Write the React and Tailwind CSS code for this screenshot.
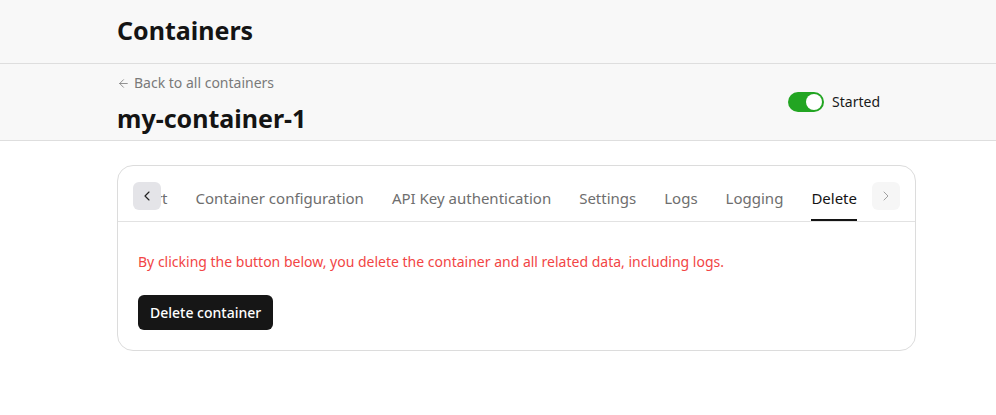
import React from "react";
import { ArrowLeft, ChevronLeft, ChevronRight } from "lucide-react";

const tabs = [
  "Quick start",
  "Container configuration",
  "API Key authentication",
  "Settings",
  "Logs",
  "Logging",
  "Delete",
];

export default function App() {
  const active = "Delete";

  return (
    <div
      className="min-h-[415px] w-[996px] bg-white text-[#141414]"
      style={{ fontFamily: '"Noto Sans", "Open Sans", sans-serif' }}
    >
      <header className="h-16 bg-[#f8f8f8] border-b border-[#dedede] pl-[117px] flex items-center">
        <h1 className="text-[25px] font-bold leading-8 -mt-1">Containers</h1>
      </header>

      <section className="h-[77px] bg-[#f8f8f8] border-b border-[#dedede] pl-[117px] pr-[116px] flex items-center justify-between">
        <div className="flex flex-col self-start pt-[9px]">
          <a className="flex items-center gap-1 text-sm text-[#7a7a7a] leading-5">
            <ArrowLeft size={13} strokeWidth={1.5} />
            Back to all containers
          </a>
          <h2 className="text-[25px] font-bold leading-8 mt-[9px]">my-container-1</h2>
        </div>
        <div className="flex items-center gap-2 -mt-[1px]">
          <div className="w-9 h-5 rounded-full bg-[#22a522] flex items-center justify-end px-[2px]">
            <div className="w-4 h-4 rounded-full bg-white" />
          </div>
          <span className="text-sm text-[#1a1a1a]">Started</span>
        </div>
      </section>

      <main className="pl-[117px] pt-6">
        <div className="w-[799px] rounded-2xl border border-[#dcdcdc] bg-white">
          <div className="border-b border-[#e2e2e2] px-[15px] pt-[15px]">
            <div className="relative h-10">
              <div className="overflow-hidden h-10">
                <div className="flex justify-end gap-7 pr-[43px] h-10">
                  {tabs.map((t) => (
                    <div
                      key={t}
                      className={`shrink-0 h-10 flex items-center pb-1 text-[15px] whitespace-nowrap border-b-2 ${
                        t === active
                          ? "border-[#141414] text-[#141414]"
                          : "border-transparent text-[#6e6e6e]"
                      }`}
                    >
                      {t}
                    </div>
                  ))}
                </div>
              </div>
              <button className="absolute left-0 top-[1px] w-7 h-7 rounded-md bg-[#e4e4e8] flex items-center justify-center text-[#222]">
                <ChevronLeft size={16} strokeWidth={1.75} />
              </button>
              <button className="absolute right-0 top-[1px] w-7 h-7 rounded-md bg-[#f6f6f6] flex items-center justify-center text-[#a0a0a0]">
                <ChevronRight size={16} strokeWidth={1.5} />
              </button>
            </div>
          </div>
          <div className="px-5 pt-[30px] pb-5">
            <p className="text-sm leading-5 text-[#f24545]">
              By clicking the button below, you delete the container and all related data, including logs.
            </p>
            <button className="mt-[23px] h-[35px] px-3 rounded-md bg-[#161616] text-white text-sm font-medium">
              Delete container
            </button>
          </div>
        </div>
      </main>
    </div>
  );
}
